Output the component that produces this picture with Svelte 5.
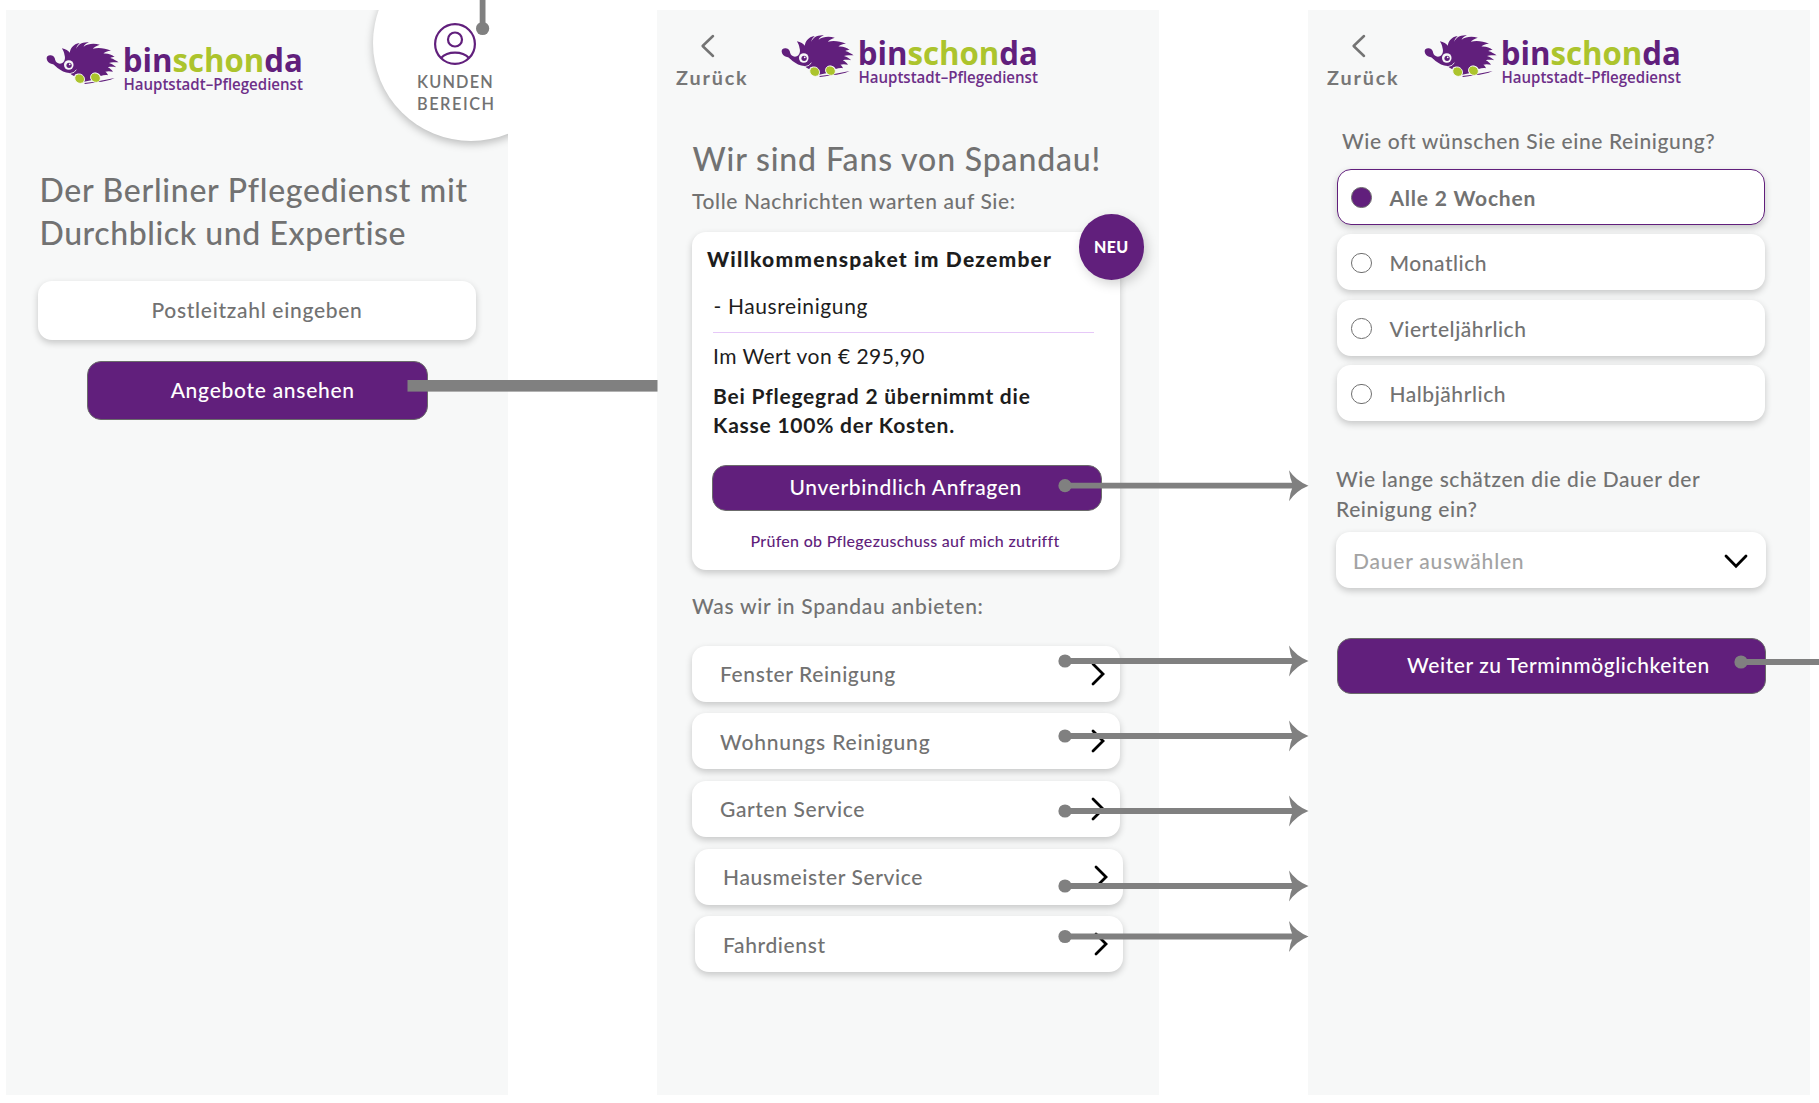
<script>
  const services = [
    { name: 'Fenster Reinigung' },
    { name: 'Wohnungs Reinigung', wide: true },
    { name: 'Garten Service' },
    { name: 'Hausmeister Service', shifted: true },
    { name: 'Fahrdienst', shifted: true }
  ];
  const intervals = ['Alle 2 Wochen', 'Monatlich', 'Vierteljährlich', 'Halbjährlich'];
  let selected = $state('Alle 2 Wochen');

  // Vertical positions of the flow arrows between the second and third screen
  const arrows = [485.7, 661, 736, 811, 886, 936.5];
</script>

{#snippet logo()}
  <svg class="logo" width="260" height="54" viewBox="0 0 260 54" role="img" aria-label="binschonda Hauptstadt-Pflegedienst">
    <g transform="translate(-2 -3) scale(0.33 0.33333)">
      <path
        fill="#611f7c"
        d="M8 61 C8 54 14 51 21 52 C29 53 33 59 34 66 C36 74 44 79 54 76 C62 71 66 62 62 50 C61 42 57 36 54 31
           C66 33 74 38 78 44 C80 32 88 18 108 15 C101 22 98 27 98 32 C103 20 116 11 136 13 C127 17 122 21 120 26
           C133 17 150 15 169 20 C158 24 151 28 148 32 C165 28 184 30 203 38 C192 39 184 42 180 47 C194 46 206 50 214 57
           C208 57 204 58 201 60 C211 63 219 68 226 73 C214 73 205 73 197 75 C206 78 213 82 219 88 C209 86 201 86 193 88
           C200 91 205 96 209 101 C200 99 192 99 186 101 C190 104 193 108 194 112 C187 110 179 112 172 114
           C166 104 155 102 146 108 C140 114 140 121 143 127 L122 131 C124 118 116 108 101 107 C95 107 92 111 92 115
           C86 112 81 109 77 105 C64 104 51 98 41 90 C34 83 29 78 24 78 C15 76 8 70 8 61 Z"
      />
      <path d="M78 107 Q94 105 98 95" fill="none" stroke="#f7f8f8" stroke-width="2.5" />
      <path d="M122 135 Q158 132 214 120 Q190 131 160 132 Q140 136 124 138 Z" fill="#611f7c" />
      <circle cx="75" cy="81" r="14.5" fill="#f7f8f8" />
      <circle cx="76" cy="82" r="8" fill="#611f7c" />
      <circle cx="78" cy="79" r="2.6" fill="#f7f8f8" />
      <ellipse cx="108" cy="122" rx="15.5" ry="13.5" transform="rotate(35 108 122)" fill="#acc42d" stroke="#f7f8f8" stroke-width="2.5" />
      <ellipse cx="156" cy="119" rx="15.5" ry="13.5" transform="rotate(35 156 119)" fill="#acc42d" stroke="#f7f8f8" stroke-width="2.5" />
    </g>
    <text class="brand" x="76.8" y="31.2" textLength="180" lengthAdjust="spacingAndGlyphs">bin<tspan class="lime">schon</tspan>da</text>
    <text class="tagline" x="77.4" y="49.4" textLength="179.5" lengthAdjust="spacingAndGlyphs">Hauptstadt–Pflegedienst</text>
  </svg>
{/snippet}

{#snippet back()}
  <button class="back">
    <svg width="16" height="24" viewBox="0 0 16 24"><path d="M13 2 L2.6 12 L13 22" /></svg>
    <span>Zurück</span>
  </button>
{/snippet}

<main>
  <section class="screen home">
    {@render logo()}
    <a class="account" href="#kunden">
      <svg width="42" height="42" viewBox="0 0 42 42">
        <circle cx="21" cy="21" r="19.9" />
        <circle cx="21" cy="16.5" r="7" />
        <path d="M7 35 Q12 29.6 21 29.6 Q30 29.6 35 35" />
      </svg>
      <span class="kunden">KUNDEN</span>
      <span class="bereich">BEREICH</span>
    </a>
    <h1><span class="lead">Der Berliner Pflegedienst mit</span><br />Durchblick und Expertise</h1>
    <div class="field zip">Postleitzahl eingeben</div>
    <button class="primary offers">Angebote ansehen</button>
  </section>

  <section class="screen spandau">
    <header>{@render back()}{@render logo()}</header>
    <h1>Wir sind Fans von Spandau!</h1>
    <p class="sub">Tolle Nachrichten warten auf Sie:</p>
    <article class="card">
      <span class="badge">NEU</span>
      <h2>Willkommenspaket im Dezember</h2>
      <p class="item">- Hausreinigung</p>
      <hr />
      <p class="worth">Im Wert von € 295,90</p>
      <p class="note">Bei Pflegegrad 2 übernimmt die<br />Kasse 100% der Kosten.</p>
      <button class="primary request">Unverbindlich Anfragen</button>
      <a class="check" href="#zuschuss">Prüfen ob Pflegezuschuss auf mich zutrifft</a>
    </article>
    <p class="offer-label">Was wir in Spandau anbieten:</p>
    <ul class="services">
      {#each services as s}
        <li class="field" class:shifted={s.shifted} class:wide={s.wide}>
          <span>{s.name}</span>
          <svg width="16" height="24" viewBox="0 0 16 24"><path d="M3 2 L13 12 L3 22" /></svg>
        </li>
      {/each}
    </ul>
  </section>

  <section class="screen booking">
    <header>{@render back()}{@render logo()}</header>
    <p class="often">Wie oft wünschen Sie eine Reinigung?</p>
    <div class="options">
      {#each intervals as name}
        <button class="field option" class:active={selected === name} onclick={() => (selected = name)}>
          <i></i><span>{name}</span>
        </button>
      {/each}
    </div>
    <p class="duration">Wie lange schätzen die die Dauer der<br />Reinigung ein?</p>
    <div class="field select">
      <span>Dauer auswählen</span>
      <svg width="24" height="16" viewBox="0 0 24 16"><path d="M2 3 L12 13.2 L22 3" /></svg>
    </div>
    <button class="primary next">Weiter zu Terminmöglichkeiten</button>
  </section>

  <svg class="flow" width="1819" height="1103" viewBox="0 0 1819 1103" aria-hidden="true">
    <path class="line" d="M482.6 0 V28" />
    <circle cx="482.6" cy="28.5" r="6.6" />
    <rect x="407.5" y="380" width="250" height="11.6" />
    {#each arrows as y}
      <g transform="translate(1065 {y})">
        <circle r="6.6" />
        <path class="line" d="M0 0 H230" />
        <path d="M224 -15.5 Q231 -5 243.5 0 Q231 5 224 15.5 Q225 7 228 0 Q225 -7 224 -15.5 Z" />
      </g>
    {/each}
    <circle cx="1741" cy="662" r="6.6" />
    <path class="line" d="M1741 662 H1819" />
  </svg>
</main>

<style>
  :global(body) {
    background: #fff;
  }
  main {
    position: relative;
    box-sizing: border-box;
    width: 1819px;
    height: 1103px;
    padding: 10px 9px 8px 6px;
    display: flex;
    justify-content: space-between;
    overflow: hidden;
    font-family: Lato, 'Open Sans', sans-serif;
    font-size: 21px;
    font-weight: 500;
    letter-spacing: 0.6px;
    color: #727272;
  }
  h1, h2, p, ul {
    margin: 0;
    padding: 0;
    font-weight: inherit;
    font-size: inherit;
  }
  button {
    font: inherit;
    letter-spacing: inherit;
    color: inherit;
    padding: 0;
    border: 0;
    background: none;
  }
  a {
    text-decoration: none;
  }
  .screen {
    position: relative;
    box-sizing: border-box;
    width: 502px;
    height: 1085px;
    background: #f7f8f8;
    display: flex;
    flex-direction: column;
    overflow: hidden;
  }
  .logo {
    display: block;
    flex: none;
    overflow: visible;
  }
  .brand {
    font: 700 32.5px 'Open Sans', sans-serif;
    letter-spacing: 0;
    fill: #611f7c;
  }
  .lime {
    fill: #acc42d;
  }
  .tagline {
    font: 600 15.3px 'Open Sans', sans-serif;
    letter-spacing: 0;
    fill: #6d2f88;
  }
  h1 {
    font-size: 32px;
    line-height: 43px;
  }
  .field {
    box-sizing: border-box;
    display: flex;
    align-items: center;
    height: 56px;
    border-radius: 14px;
    background: #fff;
    box-shadow: 0 3px 7px rgba(0, 0, 0, 0.2);
  }
  .primary {
    box-sizing: border-box;
    display: flex;
    align-items: center;
    justify-content: center;
    padding-bottom: 3px;
    border: 1.5px solid #6b6b6b;
    border-radius: 14px;
    background: #611f7c;
    color: #fff;
  }

  .home .logo {
    margin: 31px 0 0 40px;
  }
  .account {
    position: absolute;
    left: 367px;
    top: -65px;
    box-sizing: border-box;
    width: 196px;
    height: 196px;
    padding: 79px 0 0 44px;
    border-radius: 50%;
    background: #fff;
    box-shadow: 0 3px 9px rgba(0, 0, 0, 0.25);
    font-size: 16.3px;
    font-weight: 600;
    line-height: 21.5px;
    color: #727272;
    display: flex;
    flex-direction: column;
  }
  .account svg {
    margin: -1px 0 6px 16.5px;
    fill: none;
    stroke: #611f7c;
    stroke-width: 2.2;
  }
  .kunden {
    letter-spacing: 1.2px;
  }
  .bereich {
    letter-spacing: 1.55px;
  }
  .home h1 {
    margin: 73px 0 0 33.5px;
    letter-spacing: 0.57px;
  }
  .lead {
    letter-spacing: 0.72px;
  }
  .zip {
    justify-content: center;
    width: 438px;
    height: 59px;
    margin: 27px 0 0 32px;
    padding-bottom: 3px;
    letter-spacing: 0.7px;
  }
  .offers {
    width: 341px;
    height: 59px;
    margin: 21.4px 0 0 80.5px;
    padding-left: 11.5px;
    letter-spacing: 0.73px;
  }

  header {
    display: flex;
    align-items: flex-start;
    height: 54px;
    margin: 24.3px 0 0 19px;
  }
  .back {
    display: flex;
    flex-direction: column;
    align-items: flex-start;
    width: 105px;
    font-size: 19.8px;
    font-weight: 700;
    letter-spacing: 1.85px;
    line-height: 24px;
    color: #777;
  }
  .back svg {
    margin: -0.3px 0 6.6px 23.5px;
    fill: none;
    stroke: #747474;
    stroke-width: 2.5;
    stroke-linecap: round;
    stroke-linejoin: round;
  }

  .spandau h1 {
    margin: 48.3px 0 0 35.5px;
    letter-spacing: 0.85px;
  }
  .sub {
    margin: 7px 0 0 35px;
    line-height: 28px;
  }
  .card {
    position: relative;
    box-sizing: border-box;
    width: 428px;
    height: 338px;
    margin: 17px 0 0 35px;
    padding: 13.5px 0 0 20px;
    border-radius: 14px;
    background: #fff;
    box-shadow: 0 3px 7px rgba(0, 0, 0, 0.2);
    color: #1d1d1d;
    line-height: 28px;
  }
  .badge {
    position: absolute;
    left: 386.6px;
    top: -17.3px;
    width: 65.5px;
    height: 65.5px;
    border-radius: 50%;
    background: #611f7c;
    box-shadow: 3px 4px 12px rgba(0, 0, 0, 0.18);
    color: #fff;
    font-size: 16px;
    font-weight: 900;
    line-height: 66px;
    text-align: center;
    letter-spacing: 0.4px;
  }
  h2 {
    margin-left: -5px;
    font-weight: 900;
    letter-spacing: 1.19px;
  }
  .item {
    margin: 18.9px 0 0 1.5px;
    font-weight: 400;
  }
  hr {
    width: 381px;
    height: 1.5px;
    margin: 12px 0 0 1px;
    border: 0;
    background: #e6c8f8;
  }
  .worth {
    margin: 8.7px 0 0 1px;
    font-weight: 400;
    letter-spacing: 0.47px;
  }
  .note {
    margin: 11px 0 0 1px;
    font-weight: 700;
    line-height: 29.3px;
    letter-spacing: 0.77px;
  }
  .request {
    width: 389.5px;
    height: 45.5px;
    margin: 25.6px 0 0;
    padding-right: 2px;
    letter-spacing: 0.66px;
  }
  .check {
    display: block;
    margin: 18px 0 0 38.5px;
    font-size: 16px;
    line-height: 24px;
    letter-spacing: 0.28px;
    color: #611f7c;
  }
  .offer-label {
    margin: 22.3px 0 0 35px;
    line-height: 28px;
    letter-spacing: 0.7px;
  }
  .services {
    list-style: none;
    display: flex;
    flex-direction: column;
    gap: 11.6px;
    margin: 25.9px 0 0 35px;
  }
  .services .field {
    justify-content: space-between;
    width: 428px;
    padding: 0 14.5px 0 28px;
    letter-spacing: 0.62px;
  }
  .services .wide {
    letter-spacing: 0.8px;
  }
  .services .shifted {
    margin-left: 3px;
  }
  .services svg,
  .select svg {
    fill: none;
    stroke: #000;
    stroke-width: 2.8;
    stroke-linecap: round;
  }

  .booking .back {
    width: 97px;
  }
  .often {
    margin: 38.6px 0 0 34px;
    line-height: 28px;
  }
  .options {
    display: flex;
    flex-direction: column;
    gap: 9.5px;
    margin: 14.1px 0 0 29.2px;
  }
  .option {
    width: 428px;
    padding: 1px 0 0 14px;
    gap: 17.7px;
    letter-spacing: 0.55px;
    border: 0 solid #611f7c;
  }
  .option i {
    box-sizing: border-box;
    width: 20.5px;
    height: 20.5px;
    border: 1.4px solid #6f6f6f;
    border-radius: 50%;
  }
  .active {
    border-width: 1.6px;
    padding-left: 13px;
    font-weight: 700;
    letter-spacing: 0.8px;
  }
  .active i {
    background: #611f7c;
  }
  .duration {
    margin: 42.7px 0 0 28px;
    line-height: 29.4px;
    letter-spacing: 0.59px;
  }
  .select {
    justify-content: space-between;
    width: 429.5px;
    margin: 9.3px 0 0 28px;
    padding: 0 17.5px 0 17px;
    letter-spacing: 0.79px;
    color: #a3a3a3;
  }
  .select svg {
    margin-top: 2px;
  }
  .next {
    width: 428.5px;
    height: 55.5px;
    margin: 50px 0 0 29.2px;
    padding-left: 14px;
    padding-right: 0;
    letter-spacing: 0.58px;
  }

  /* Prototype connectors drawn over the screens */
  .flow {
    position: absolute;
    inset: 0;
    fill: #808080;
    pointer-events: none;
  }
  .line {
    fill: none;
    stroke: #808080;
    stroke-width: 5.8;
  }
</style>
